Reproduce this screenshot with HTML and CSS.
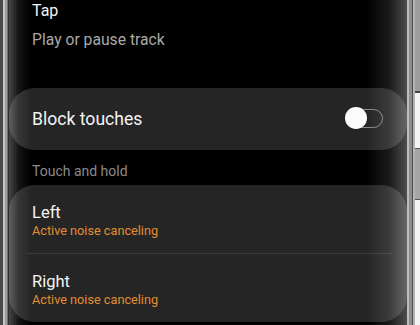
FILE: index.html
```html
<!DOCTYPE html>
<html>
<head>
<meta charset="utf-8">
<link rel="stylesheet" href="styles.css">
</head>
<body>
<div class="device">
  <div class="bezel-left"></div>
  <div class="screen">
    <div class="plain">
      <div class="plain-title">Tap</div>
      <div class="plain-sub">Play or pause track</div>
    </div>
    <div class="card switch-card">
      <div class="switch-label">Block touches</div>
      <div class="toggle"><div class="knob"></div></div>
    </div>
    <div class="section-label">Touch and hold</div>
    <div class="card list-card">
      <div class="row">
        <div class="row-title">Left</div>
        <div class="row-sub">Active noise canceling</div>
      </div>
      <div class="divider"></div>
      <div class="row">
        <div class="row-title">Right</div>
        <div class="row-sub">Active noise canceling</div>
      </div>
    </div>
    <div class="edge edge-left"></div>
    <div class="edge edge-right"></div>
  </div>
  <div class="bezel-right"></div>
  <div class="outside">
    <div class="outside-top"></div>
    <div class="side-button"></div>
  </div>
</div>
</body>
</html>
```
FILE: styles.css
```css
* { box-sizing: border-box; }
html, body { margin: 0; padding: 0; }
body {
  width: 420px;
  height: 325px;
  overflow: hidden;
  background: #f2f2f2;
  font-family: Roboto, "Noto Sans", "Liberation Sans", sans-serif;
}
.device {
  display: flex;
  height: 325px;
}
.bezel-left {
  width: 9px;
  flex: none;
  background: linear-gradient(to right,
    #4a4a4a 0, #4a4a4a 3px,
    #c4c4c4 3px, #c4c4c4 5px,
    #9c9c9c 5px, #9c9c9c 7px,
    #707070 7px, #707070 8px,
    #2e2e2e 8px, #2e2e2e 9px);
}
.screen {
  position: relative;
  width: 398px;
  flex: none;
  background: #000;
  overflow: hidden;
}
.plain {
  padding: 1px 0 0 23px;
}
.plain-title {
  font-size: 16px;
  line-height: 20px;
  color: #f4f4f4;
}
.plain-sub {
  margin-top: 9px;
  font-size: 15.7px;
  line-height: 20px;
  color: #a9a9a9;
}
.card {
  background: #252525;
  border-radius: 26px;
}
.switch-card {
  margin-top: 38px;
  height: 62px;
  display: flex;
  align-items: center;
  justify-content: space-between;
  padding: 0 24px 0 23px;
}
.switch-label {
  font-size: 17.6px;
  line-height: 24px;
  color: #f4f4f4;
}
.toggle {
  position: relative;
  width: 36px;
  height: 19px;
  border: 1.5px solid #8a8a8a;
  border-radius: 10px;
  margin-top: -1px;
}
.knob {
  position: absolute;
  left: -3px;
  top: -2.7px;
  width: 21.5px;
  height: 21.5px;
  border-radius: 50%;
  background: #fbfbfb;
  box-shadow: 0 0 1px rgba(0,0,0,0.5);
}
.section-label {
  margin-top: 12px;
  padding-left: 23px;
  font-size: 14px;
  line-height: 18px;
  color: #8a8a8a;
}
.list-card {
  margin-top: 5px;
}
.row {
  height: 68px;
  padding: 17px 0 0 23px;
}
.row-title {
  font-size: 16.5px;
  line-height: 21px;
  color: #f4f4f4;
}
.row-sub {
  font-size: 12.7px;
  line-height: 16px;
  color: #e28e2f;
}
.divider {
  height: 1px;
  margin: 0 15px 0 17px;
  background: #3a3a3a;
}
.edge {
  position: absolute;
  top: 0;
  bottom: 0;
  pointer-events: none;
}
.edge-left {
  left: 0;
  width: 22px;
  background: linear-gradient(to right, rgba(255,255,255,0.27), rgba(255,255,255,0.08) 45%, rgba(255,255,255,0));
}
.edge-right {
  right: 0;
  width: 40px;
  background: linear-gradient(to right, rgba(255,255,255,0), rgba(255,255,255,0.1) 55%, rgba(255,255,255,0.3));
}
.bezel-right {
  width: 8px;
  flex: none;
  background: linear-gradient(to right,
    #bcbcbc 0, #bcbcbc 2px,
    #8c8c8c 2px, #8c8c8c 5px,
    #4e4e4e 5px, #4e4e4e 6px,
    #b4b4b4 6px, #b4b4b4 8px);
}
.outside {
  flex: 1;
  display: flex;
  flex-direction: column;
  background: #f4f4f4;
}
.outside-top {
  height: 93px;
  background: #9e9e9e;
  border-bottom: 2px solid #444;
}
.side-button {
  margin-top: 55px;
  height: 52px;
  background: #a6a6a6;
  border-top: 1px solid #555;
  border-bottom: 1px solid #555;
}
```
